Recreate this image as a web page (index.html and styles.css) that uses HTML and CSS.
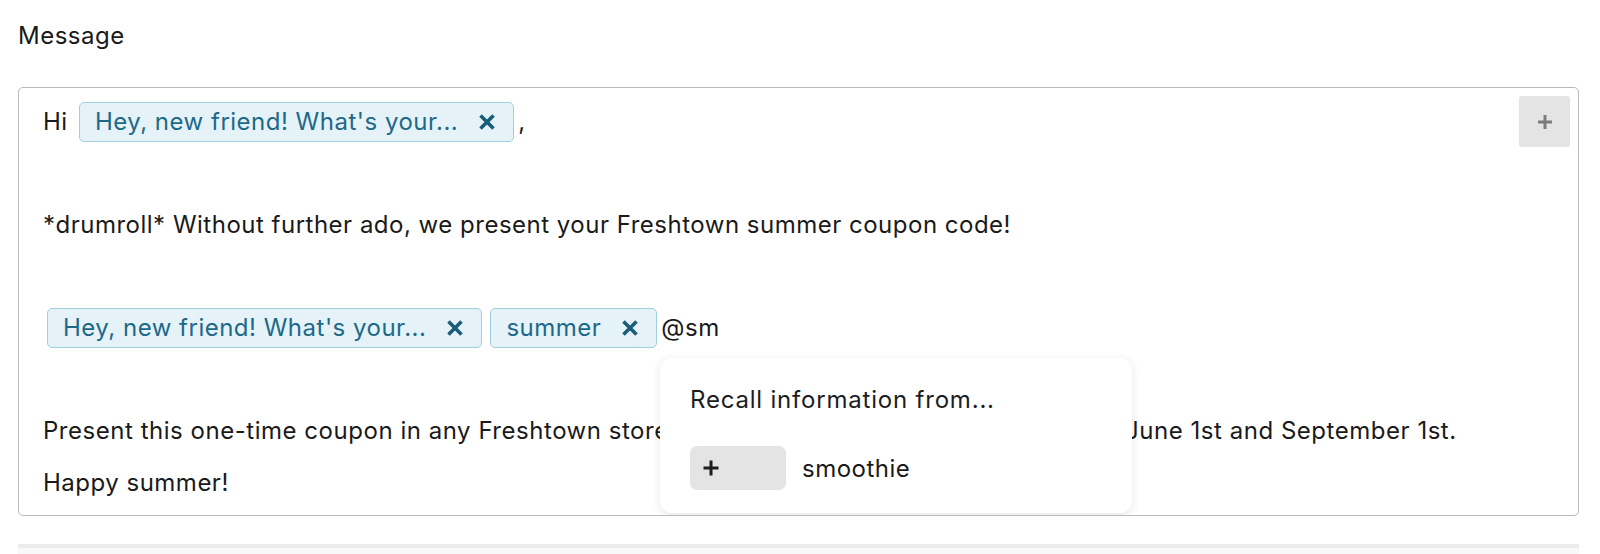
FILE: index.html
```html
<!DOCTYPE html>
<html lang="en">
<head>
    <meta charset="UTF-8">
    <meta name="viewport" content="width=device-width, initial-scale=1.0">
    <title>Message</title>
    <link rel="stylesheet" href="styles.css">
</head>
<body>

<div class="field">
    <div class="label">Message</div>

    <div class="editor">
        <div class="line">Hi <span class="chip"><span class="chip-text">Hey, new friend! What's your...</span><svg class="chip-x" viewBox="0 0 18 18"><path d="M2.5 2.5 L15.5 15.5 M15.5 2.5 L2.5 15.5"/></svg></span>,</div>
        <div class="line"><br></div>
        <div class="line">*drumroll* Without further ado, we present your Freshtown summer coupon code!</div>
        <div class="line"><br></div>
        <div class="line"><span class="chip"><span class="chip-text">Hey, new friend! What's your...</span><svg class="chip-x" viewBox="0 0 18 18"><path d="M2.5 2.5 L15.5 15.5 M15.5 2.5 L2.5 15.5"/></svg></span><span class="chip"><span class="chip-text">summer</span><svg class="chip-x" viewBox="0 0 18 18"><path d="M2.5 2.5 L15.5 15.5 M15.5 2.5 L2.5 15.5"/></svg></span>@sm</div>
        <div class="line"><br></div>
        <div class="line coupon">Present this one-time coupon in any Freshtown store for a free smoothie, any day between June 1st and September 1st.</div>
        <div class="line">Happy summer!</div>

        <button class="add-btn" type="button">
            <svg viewBox="0 0 18 18"><path d="M9 2 V16 M2 9 H16"/></svg>
        </button>

        <div class="recall">
            <div class="recall-title">Recall information from...</div>
            <div class="recall-item">
                <span class="recall-icon"><svg viewBox="0 0 18 18"><path d="M9 1.5 V16.5 M1.5 9 H16.5"/></svg></span>
                <span>smoothie</span>
            </div>
        </div>
    </div>

    <div class="bottom-bar"></div>
</div>

</body>
</html>
```

FILE: styles.css
```css
body {
    margin: 0;
    font-family: Inter, "Noto Sans", sans-serif;
    font-size: 24px;
    letter-spacing: 0.5px;
    color: #1a1a1a;
    background: #fff;
}
.field {
    padding: 18px 21px 0 18px;
}
.label {
    line-height: 36px;
}
.editor {
    position: relative;
    margin-top: 33px;
    height: 409px;
    padding: 8px 23px 10px 24px;
    border: 1px solid #b9b9b9;
    border-radius: 5px;
    overflow: hidden;
}
.line {
    line-height: 51.5px;
    white-space: nowrap;
}
.coupon {
    letter-spacing: 0.53px;
}
.chip {
    display: inline-flex;
    align-items: center;
    height: 38px;
    margin: 0 4px;
    padding: 0 17px 0 15px;
    border: 1px solid #9fd0e1;
    border-radius: 5px;
    background-color: #e5f2f7;
    color: #1d6989;
    line-height: normal;
}
.chip-x {
    width: 18px;
    height: 18px;
    margin-left: 20px;
    fill: none;
    stroke: #195d79;
    stroke-width: 3.6;
}
.add-btn {
    position: absolute;
    top: 8px;
    right: 8px;
    width: 51px;
    height: 51px;
    padding: 0;
    border: none;
    border-radius: 3px;
    background-color: #e4e4e4;
    display: flex;
    align-items: center;
    justify-content: center;
}
.add-btn svg {
    width: 18px;
    height: 18px;
    fill: none;
    stroke: #7b7b7b;
    stroke-width: 3;
}
.recall {
    position: absolute;
    left: 641px;
    top: 270px;
    width: 472px;
    height: 155px;
    box-sizing: border-box;
    padding: 27px 30px 0;
    background: #fff;
    border-radius: 12px;
    box-shadow: 0 2px 10px rgba(0, 0, 0, 0.1);
}
.recall-title {
    line-height: normal;
    letter-spacing: 0.8px;
    color: #1d1d1f;
}
.recall-item {
    display: flex;
    align-items: center;
    gap: 16px;
    margin-top: 32px;
}
.recall-icon {
    display: flex;
    align-items: center;
    width: 96px;
    height: 44px;
    box-sizing: border-box;
    padding-left: 12px;
    background-color: #e4e4e4;
    border-radius: 7px;
}
.recall-icon svg {
    width: 18px;
    height: 18px;
    fill: none;
    stroke: #1d1d1f;
    stroke-width: 3;
}
.bottom-bar {
    margin-top: 28px;
    height: 12px;
    border-top: 4px solid #ececec;
    background-color: #f8f8f8;
}
```
